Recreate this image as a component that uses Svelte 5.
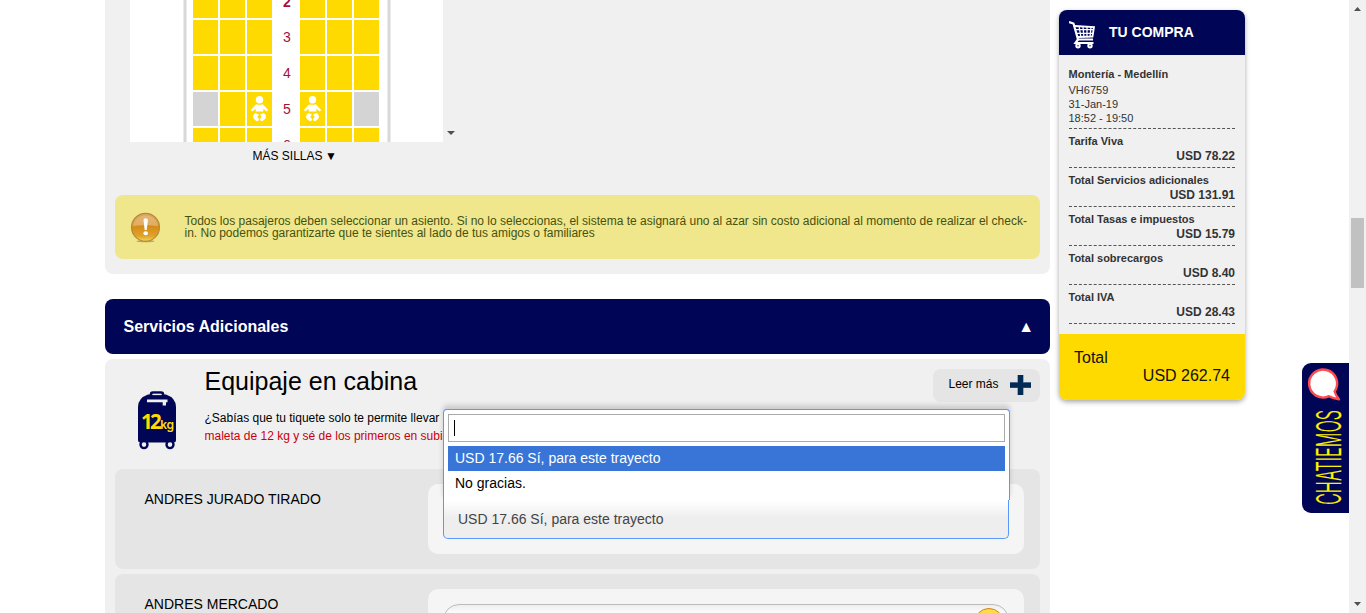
<script>
  const rows = [
    { n: 2, off: [], baby: false },
    { n: 3, off: [], baby: false },
    { n: 4, off: [], baby: false },
    { n: 5, off: [0, 5], baby: true },
    { n: 6, off: [], baby: false }
  ];
  const charges = [
    { label: 'Tarifa Viva', value: 'USD 78.22' },
    { label: 'Total Servicios adicionales', value: 'USD 131.91' },
    { label: 'Total Tasas e impuestos', value: 'USD 15.79' },
    { label: 'Total sobrecargos', value: 'USD 8.40' },
    { label: 'Total IVA', value: 'USD 28.43' }
  ];
</script>

{#snippet seat(row, i)}
  <div class="seat" class:off={row.off.includes(i)}>
    {#if row.baby && (i === 2 || i === 3)}
      <svg width="17" height="26" viewBox="0 0 17 26" fill="#fff">
        <circle cx="8.5" cy="3.7" r="3.7" />
        <path d="M5.2 8.2Q8.5 9.5 11.8 8.2L16.8 13.6Q17.2 15.4 15.3 15.2L12.3 12.8V15.5H4.7V12.8L1.7 15.2Q-.2 15.4.2 13.6Z" />
        <path d="M4.300 17L7.900 18.500L6.300 21L8.200 23.200Q7.700 25.200 5.900 25.200Q2 23 2 20.500Q2.300 18 4.300 17ZM12.700 17L9.100 18.500L10.700 21L8.800 23.200Q9.300 25.200 11.100 25.200Q15 23 15 20.500Q14.700 18 12.700 17Z" />
      </svg>
    {/if}
  </div>
{/snippet}

<div class="page">
  <main>
    <section class="seats">
      <div class="viewport">
        <div class="map">
          <div class="fuselage">
            {#each rows as row}
              <div class="row">
                {#each [0, 1, 2] as i}{@render seat(row, i)}{/each}
                <div class="num" class:strong={row.n === 2}>{row.n}</div>
                {#each [3, 4, 5] as i}{@render seat(row, i)}{/each}
              </div>
            {/each}
          </div>
        </div>
        <svg class="down" width="8" height="4" viewBox="0 0 8 4"><path d="M0 0H8L4 4Z" fill="#505050" /></svg>
      </div>
      <div class="more">MÁS SILLAS <span>▼</span></div>
      <div class="alert">
        <svg width="31" height="31" viewBox="0 0 31 31">
          <defs>
            <linearGradient id="amber" x1="0" y1="0" x2="0" y2="1">
              <stop offset="0" stop-color="#dda763" />
              <stop offset=".42" stop-color="#dc9c3c" />
              <stop offset=".46" stop-color="#d58b18" />
              <stop offset=".8" stop-color="#dfa12b" />
              <stop offset="1" stop-color="#f3d74e" />
            </linearGradient>
          </defs>
          <ellipse cx="15.5" cy="29.3" rx="9" ry="1" fill="#b5a66a" />
          <circle cx="15.5" cy="15.3" r="14" fill="url(#amber)" stroke="#b58b3c" stroke-width="1.2" />
          <path d="M3 14.5A12.6 12.6 0 0 1 28 14.5Q15 11 3 14.5Z" fill="#fff" opacity=".18" />
          <path d="M13.5 8Q13.5 6.3 15.7 6.3T17.9 8L16.7 18H14.7Z" fill="#fff" />
          <ellipse cx="15.7" cy="21.3" rx="2.3" ry="2" fill="#fff" />
        </svg>
        <p>Todos los pasajeros deben seleccionar un asiento. Si no lo seleccionas, el sistema te asignará uno al azar sin costo adicional al momento de realizar el check-<br />in. No podemos garantizarte que te sientes al lado de tus amigos o familiares</p>
      </div>
    </section>

    <header class="bar"><h2>Servicios Adicionales</h2><span>▲</span></header>

    <section class="extras">
      <div class="intro">
        <svg class="bag" width="38" height="59" viewBox="0 0 38 59">
          <path d="M13 5V3.500Q13 1.500 15 1.500H23Q25 1.500 25 3.500V5" fill="none" stroke="#000655" stroke-width="2.600" />
          <path d="M10 3.500H28Q38 7 38 16V49Q38 51.500 35.500 51.500H2.500Q0 51.500 0 49V16Q0 7 10 3.500Z" fill="#000655" />
          <path d="M14.500 3.500H23.500" stroke="#f0f0f0" stroke-width="1.200" />
          <path d="M9 8.500H29.500V11.300H28V14.500H24.700V11.300H9Z" fill="#f0f0f0" />
          <circle cx="6" cy="53.600" r="3.500" fill="#f0f0f0" stroke="#000655" stroke-width="2.400" />
          <circle cx="32" cy="53.600" r="3.500" fill="#f0f0f0" stroke="#000655" stroke-width="2.400" />
          <text x="3" y="37.500" fill="#ffdc00"><tspan font-size="20.500" font-weight="700" letter-spacing="-2.800">12</tspan><tspan class="unit" x="22.300" font-size="12" font-weight="600" letter-spacing="-.3">kg</tspan></text>
        </svg>
        <div class="copy">
          <h1>Equipaje en cabina</h1>
          <p>¿Sabías que tu tiquete solo te permite llevar<br /><em>maleta de 12 kg y sé de los primeros en subi</em></p>
        </div>
        <div class="read">
          Leer más
          <svg width="21" height="20" viewBox="0 0 21 20">
            <path d="M7 0H14V20H7Z" fill="#9aa8b8" />
            <path d="M0 7H21V13H0Z" fill="#4c6a8a" />
            <path d="M8 0H13V20H8ZM0 8H21V12.500H0Z" fill="#002b54" />
          </svg>
        </div>
      </div>

      <div class="pax">
        <div class="name">ANDRES JURADO TIRADO</div>
        <div class="field">
          <div class="combo">
            <div class="drop">
              <div class="search"><i></i></div>
              <div class="opt on">USD 17.66 Sí, para este trayecto</div>
              <div class="opt">No gracias.</div>
            </div>
            <div class="chosen">USD 17.66 Sí, para este trayecto</div>
          </div>
        </div>
      </div>
      <div class="pax">
        <div class="name">ANDRES MERCADO</div>
        <div class="field">
          <div class="pill"><b></b></div>
        </div>
      </div>
    </section>
  </main>

  <aside>
    <div class="head">
      <svg width="27" height="29" viewBox="0 0 27 29" fill="none" stroke="#fff">
        <path d="M0 1L4.500 2.500L9 18.500H24" stroke-width="2.200" />
        <path d="M5.500 5L25 6L23.500 15.500L8 16" stroke-width="1.800" />
        <path d="M6.500 8.700H25M7.500 12.300H24.300M10 5L12 16.500M14 6L15 16.500M18 6V16.500M22 6L21 16" stroke-width="1.300" />
        <path d="M9 18.500L6.500 22H24.500" stroke-width="2.200" />
        <circle cx="9" cy="24.800" r="1.700" stroke-width="2" />
        <circle cx="21" cy="24.800" r="1.700" stroke-width="2" />
      </svg>
      TU COMPRA
    </div>
    <div class="body">
      <div class="flight">
        <strong>Montería - Medellín</strong>
        <span>VH6759</span><span>31-Jan-19</span><span>18:52 - 19:50</span>
      </div>
      {#each charges as c}
        <div class="charge"><span>{c.label}</span><b>{c.value}</b></div>
      {/each}
    </div>
    <div class="total"><span>Total</span><b>USD 262.74</b></div>
  </aside>

  <div class="chat">
    <svg width="47" height="150" viewBox="0 0 47 150">
      <path d="M32.600 28.500A14 14 0 1 0 27 33.200Q31 35.500 37 36.300Q34 33 32.600 28.500Z" fill="#fff" stroke="#ff4a50" stroke-width="2.400" stroke-linejoin="round" />
      <text transform="translate(39 142) rotate(-90)" font-size="34" font-weight="300" fill="#fff200" stroke="#fff200" stroke-width=".2" textLength="95" lengthAdjust="spacingAndGlyphs">CHATIEMOS</text>
    </svg>
  </div>

  <div class="scroll">
    <svg width="7" height="4" viewBox="0 0 7 4"><path d="M0 4H7L3.500 0Z" fill="#505050" /></svg>
    <div class="thumb"></div>
    <svg width="7" height="4" viewBox="0 0 7 4"><path d="M0 0H7L3.500 4Z" fill="#505050" /></svg>
  </div>
</div>

<style>
  :global(body) { margin: 0; background: #fff; overflow: hidden; }
  * { box-sizing: border-box; }
  .page {
    display: flex; width: 1366px; height: 613px; overflow: hidden; padding-left: 105px;
    font-family: "Liberation Sans", Arial, sans-serif; font-size: 12px; color: #000;
  }
  main { width: 945px; flex: none; }
  h1, h2, p { margin: 0; font-weight: 400; }

  .seats { height: 274px; background: #f0f0f0; border-radius: 0 0 8px 8px; padding: 0 10px; }
  .viewport { display: flex; align-items: flex-end; gap: 4px; height: 142px; padding-left: 15px; }
  .map { width: 313px; height: 142px; background: #fff; overflow: hidden; display: flex; padding-left: 54px; }
  .fuselage {
    width: 206px; height: 180px; margin-top: -16px; padding-left: 7px; flex: none;
    border: solid #d8d8d8; border-width: 0 2px; box-shadow: 0 0 0 1px #ebebeb, inset 0 0 0 1px #ebebeb;
  }
  .row { display: flex; gap: 2px; height: 34px; margin-bottom: 2px; }
  .seat { width: 25px; height: 34px; flex: none; background: #ffda00; display: flex; justify-content: center; padding-top: 4px; }
  .seat.off { background: #d4d4d4; }
  .num { width: 24px; flex: none; padding-left: 2px; line-height: 34px; text-align: center; font-size: 14px; color: #a50f3c; }
  .num.strong { font-weight: 700; line-height: 36px; }
  .down { margin-bottom: 7px; }
  .more { height: 53px; padding: 7px 0 0 137.5px; line-height: 14px; }
  .more span { display: inline-block; font-size: 12px; margin-left: -1px; }
  .alert {
    display: flex; align-items: center; gap: 24px; height: 64px; padding-left: 15px;
    border-radius: 8px; background: #f0e68c; color: #45520e; line-height: 12px; white-space: nowrap;
  }
  .alert svg { flex: none; }
  .alert p { margin-left: -.5px; }

  .bar {
    display: flex; align-items: center; justify-content: space-between; height: 55px; margin: 25px 0 5px;
    padding: 0 16px 0 18.5px; border-radius: 8px; background: #000655; color: #fff;
  }
  .bar h2 { font-size: 16px; font-weight: 700; }
  .bar span { font-size: 16px; }

  .extras { height: 260px; padding: 0 10px; background: #f0f0f0; border-radius: 8px 8px 0 0; }
  .intro { display: flex; height: 110px; }
  .bag { margin: 32px 0 0 23px; flex: none; }
  .bag text { font-family: "Open Sans", sans-serif; }
  .bag .unit { font-family: Inter, sans-serif; }
  .copy { flex: 1; margin-left: 28.5px; padding-top: 7px; white-space: nowrap; }
  .copy h1 { font-size: 25px; line-height: 30px; }
  .copy p { margin-top: 13px; line-height: 18px; }
  .copy em { font-style: normal; color: #c9000d; }
  .read {
    display: flex; align-items: center; justify-content: space-between; width: 107px; height: 33px;
    margin-top: 10px; padding: 0 9px 3px 15.5px; border-radius: 8px; background: #e5e5e5;
  }
  .read svg { margin-top: 2px; }

  .pax {
    display: flex; justify-content: space-between; height: 100px; margin-bottom: 5px; padding: 15px 16px 15px 29.5px;
    border-radius: 8px; background: #e5e5e5; font-size: 14px;
  }
  .name { line-height: 30px; }
  .field { width: 596px; height: 70px; padding: 15px 15px 0; border-radius: 10px; background: #f5f5f5; }
  .combo { position: relative; width: 566px; height: 40px; }
  .chosen {
    height: 40px; padding: 1px 0 0 14px; line-height: 38px; color: #444; border: 1px solid #5897fb; border-top: 0;
    border-radius: 0 0 5px 5px; background: linear-gradient(#fff 0, #fff 5%, #eee 48%);
  }
  .drop {
    position: absolute; left: 0; bottom: 39px; width: 567px; height: 91px; padding: 4px; background: #fff;
    border: 1px solid #5897fb; border-bottom: 0; border-radius: 4px 4px 0 0; box-shadow: 0 -4px 5px rgba(0, 0, 0, .15);
  }
  .search { height: 28px; margin-bottom: 4px; padding: 5px; border: 1px solid #aaa; }
  .search i { display: block; width: 1px; height: 16px; background: #000; }
  .opt { height: 25px; line-height: 24px; padding-left: 7px; }
  .opt.on { color: #fff; background: #3875d7; }
  .pill {
    display: flex; justify-content: flex-end; height: 33px; padding: 3px 4px; border: 1px solid #bcbcbc; border-radius: 16px;
    background: linear-gradient(#eee, #fafafa 7px);
  }
  .pill b { width: 30px; height: 30px; flex: none; border: 1px solid #d87f1b; border-radius: 50%; background: #ffdb4a; }

  aside {
    flex: none; width: 186px; height: 390px; margin: 10px 0 0 9px; border-radius: 8px; overflow: hidden;
    background: #f0f0f0; box-shadow: 0 2px 5px rgba(0, 0, 0, .35);
  }
  .head { display: flex; gap: 13px; height: 45px; padding: 11px 0 0 10px; background: #000655; color: #fff; font-size: 14px; font-weight: 700; line-height: 22px; }
  .head svg { flex: none; }
  .body { height: 279px; padding: 12px 10px 0 9.5px; font-size: 11px; color: #333; }
  .flight { height: 62px; border-bottom: 1px dashed #555; }
  .flight strong { display: block; line-height: 14px; margin-bottom: 2px; }
  .flight span { display: block; line-height: 14px; }
  .charge { height: 39px; padding-top: 5px; border-bottom: 1px dashed #555; font-weight: 700; }
  .charge span { display: block; line-height: 15px; }
  .charge b { display: block; line-height: 14px; text-align: right; font-size: 12px; }
  .total { height: 66px; padding: 15px 15px 0; background: #ffda00; color: #111; font-size: 16px; line-height: 18px; }
  .total span { display: block; }
  .total b { display: block; font-weight: 400; text-align: right; }

  .chat { flex: none; width: 47px; height: 150px; margin: 363px 0 0 57px; border-radius: 9px 0 0 9px; background: #000655; overflow: hidden; }
  .chat svg { display: block; }
  .chat text { font-family: Inter, "Open Sans", sans-serif; }

  .scroll { flex: none; display: flex; flex-direction: column; align-items: center; justify-content: space-between; width: 17px; padding: 7px 0; background: #f1f1f1; }
  .thumb { width: 13px; height: 70px; margin-bottom: 107px; background: #c1c1c1; }
</style>
